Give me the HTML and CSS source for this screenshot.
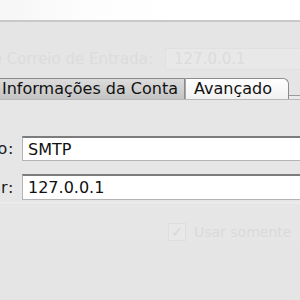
FILE: index.html
```html
<!DOCTYPE html>
<html>
<head>
<meta charset="utf-8">
<link rel="stylesheet" href="styles.css">
</head>
<body>
<div class="top"></div>
<div class="main">
  <div class="ghost-row">
    <span class="ghost-label">Servidor de Correio de Entrada:</span>
    <span class="ghost-field">127.0.0.1</span>
  </div>
  <div class="tabs">
    <div class="tab tab-selected">Informações da Conta</div>
    <div class="tab tab-plain">Avançado</div>
    <div class="tab-rest"></div>
  </div>
  <div class="panel">
    <div class="row">
      <span class="label">Tipo:</span>
      <span class="field">SMTP</span>
    </div>
    <div class="row row-second">
      <span class="label">Servidor:</span>
      <span class="field">127.0.0.1</span>
    </div>
    <div class="ghost-line"></div>
    <div class="ghost-check">
      <span class="ghost-box">✓</span>
      <span class="ghost-text">Usar somente</span>
    </div>
  </div>
</div>
</body>
</html>
```
FILE: styles.css
```css
html, body {
  margin: 0;
  padding: 0;
}
body {
  width: 300px;
  height: 300px;
  overflow: hidden;
  background: #e6e6e6;
  font-family: "DejaVu Sans", "Liberation Sans", sans-serif;
  color: #1a1a1a;
}
.top {
  height: 20px;
  background: linear-gradient(90deg, #f6f6f6 0%, #fdfdfd 30%, #ffffff 60%);
  border-bottom: 2px solid #c9c9c9;
}
.main {
  background: #e5e5e5;
  height: 278px;
}
.ghost-row {
  display: flex;
  align-items: center;
  padding-top: 26px;
  margin-left: -100px;
  gap: 12px;
  height: 21px;
}
.ghost-label {
  width: 253px;
  text-align: right;
  font-size: 15px;
  color: #dcdcdc;
  white-space: nowrap;
}
.ghost-field {
  flex: 1;
  height: 20px;
  line-height: 20px;
  background: #e8e8e8;
  border: 1px solid #e0e0e0;
  border-right: none;
  padding-left: 8px;
  font-size: 15px;
  color: #dcdcdc;
}
.tabs {
  display: flex;
  margin-top: 9px;
  margin-left: -13px;
  height: 21px;
  align-items: flex-end;
}
.tab {
  box-sizing: border-box;
  height: 21px;
  line-height: 20px;
  font-size: 16px;
  white-space: nowrap;
  border: 1px solid #8c8c8c;
  border-bottom: none;
}
.tab-selected {
  padding: 0 6px 0 14px;
  background: linear-gradient(#dcdcdc, #c4c4c4);
  color: #111;
}
.tab-plain {
  width: 104px;
  padding-left: 8px;
  background: linear-gradient(#ffffff, #f1f1f1);
  border-left: 1px solid #a8a8a8;
  border-radius: 0 6px 0 0;
  color: #111;
}
.tab-rest {
  flex: 1;
  height: 3px;
  border-top: 1px solid #9a9a9a;
  background: #eaeaea;
}
.panel {
  border-top: 1px solid #b8b8b8;
  background: #e6e6e6;
  padding-top: 36px;
}
.row {
  display: flex;
  align-items: center;
  margin-left: -96px;
  gap: 8px;
}
.row-second {
  margin-top: 13px;
}
.label {
  flex: none;
  width: 110px;
  text-align: right;
  font-size: 16px;
  letter-spacing: 0.6px;
  color: #1a1a1a;
  white-space: nowrap;
}
.field {
  flex: 1;
  box-sizing: border-box;
  height: 25px;
  line-height: 23px;
  padding-left: 5px;
  background: #ffffff;
  border: 1px solid #b4b4b4;
  border-top: 2px solid #7c7c7c;
  border-right: none;
  font-size: 16px;
  color: #111;
}
.row-second .field {
  height: 26px;
}
.ghost-line {
  height: 3px;
  margin-top: 2px;
  background: linear-gradient(#f0f0f0, #e2e2e2);
}
.ghost-check {
  display: flex;
  align-items: center;
  gap: 8px;
  margin-top: 18px;
  margin-left: 168px;
}
.ghost-box {
  width: 16px;
  height: 16px;
  line-height: 16px;
  border: 1px solid #dedede;
  background: #e8e8e8;
  color: #d8d8d8;
  font-size: 15px;
  text-align: center;
}
.ghost-text {
  font-size: 14px;
  color: #dadada;
  white-space: nowrap;
}
```
